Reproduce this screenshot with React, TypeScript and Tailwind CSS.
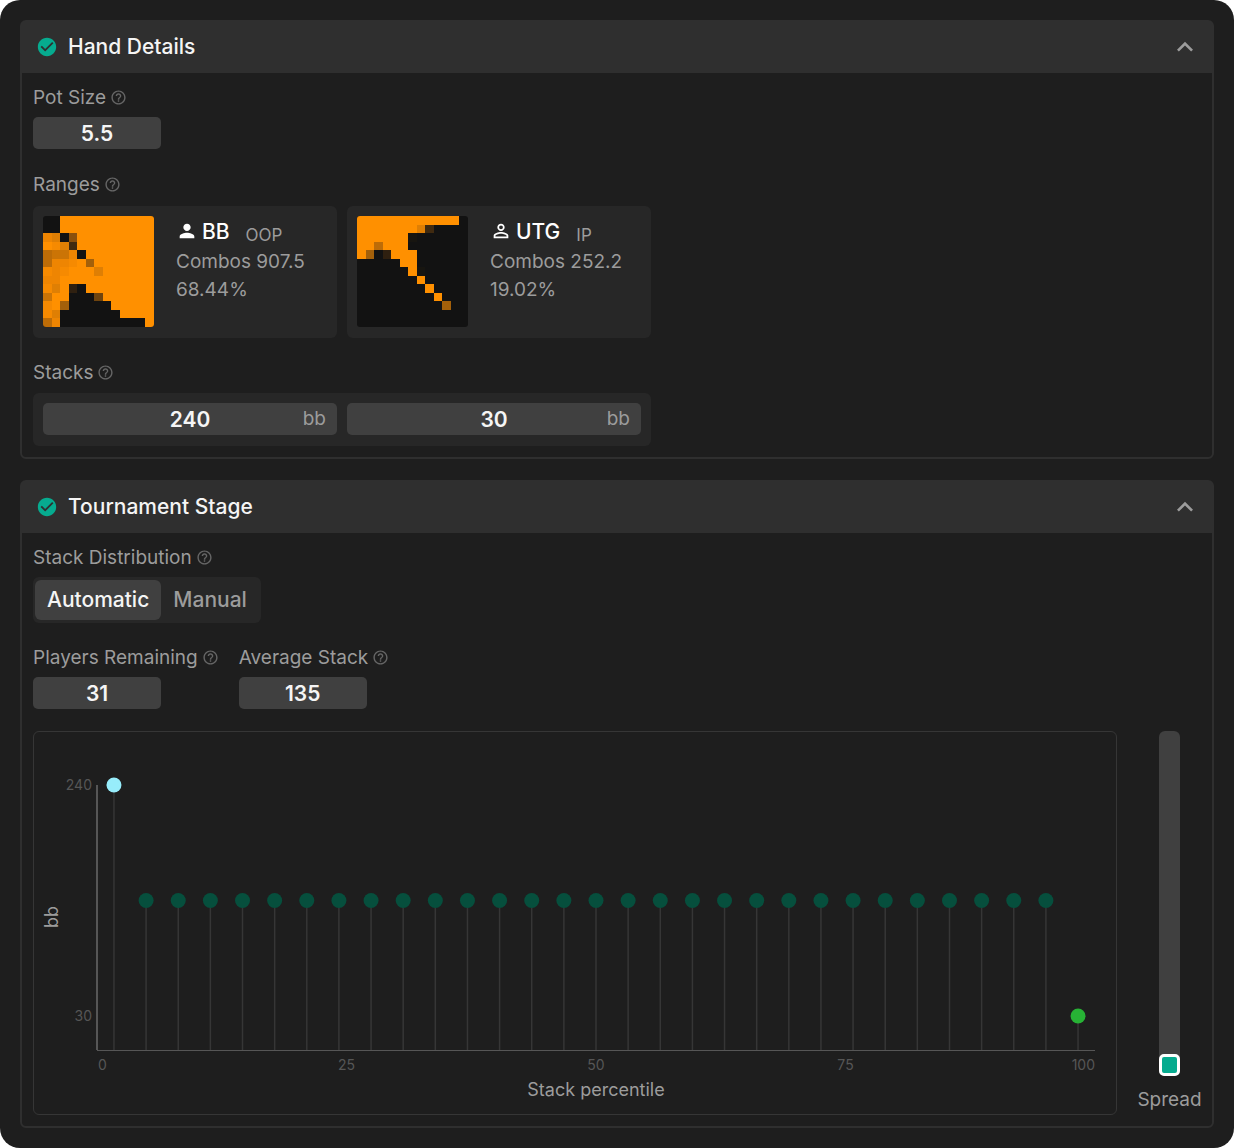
import React, { useId, useState } from "react";
import {
  MdCheckCircle,
  MdExpandLess,
  MdHelpOutline,
  MdPerson,
  MdPersonOutline,
} from "react-icons/md";

const ORANGE = "#ff9000";
const BLACK = "#121212";

/* Each row: "o" is a full cell, "." an empty one, any other key is a partial frequency. */
const SHADES: Record<string, string> = {
  o: ORANGE,
  ".": BLACK,
  a: "#f68a01",
  b: "#ee8502",
  c: "#df7f04",
  d: "#cb7406",
  e: "#bd6c07",
  f: "#a3600a",
  g: "#8a500d",
  h: "#6f440e",
  i: "#402a10",
  j: "#2f2010",
  k: "#171510",
};

const BB_RANGE = [
  "..ooooooooooo",
  "..ooooooooooo",
  "bc.gooooooooo",
  "oaciooooooooo",
  "eddb.oooooooo",
  "ebbaofooooooo",
  "abaooocoooooo",
  "bbooooooooooo",
  "acoj.oooooooo",
  "doo...hoooooo",
  "aof.....ooooo",
  "ac.......oooo",
  "eb..........o",
];

const UTG_RANGE = [
  "oooooooooooo.",
  "oooooooci....",
  "ooooook......",
  "ooeooo.......",
  "of.jooo......",
  ".....oo......",
  "......ok.....",
  ".......o.....",
  "........o....",
  ".........o...",
  "..........f..",
  ".............",
  ".............",
];

function RangeMatrix({ rows, title }: { rows: string[]; title: string }) {
  return (
    <svg
      role="img"
      aria-label={title}
      viewBox="0 0 13 13"
      shapeRendering="crispEdges"
      className="size-[111px] shrink-0 rounded-[3px]"
    >
      <rect width="13" height="13" fill={BLACK} />
      {rows.map((row, y) =>
        row
          .split("")
          .map((key, x) =>
            key === "." ? null : (
              <rect key={`${x}-${y}`} x={x} y={y} width="1" height="1" fill={SHADES[key]} />
            ),
          ),
      )}
    </svg>
  );
}

function Label({ text, htmlFor }: { text: string; htmlFor?: string }) {
  return (
    <div className="flex h-[25px] items-center gap-1 text-[19px] text-[#9c9c9c]">
      {htmlFor ? (
        <label htmlFor={htmlFor} className="pt-0.5">
          {text}
        </label>
      ) : (
        <span className="pt-0.5">{text}</span>
      )}
      <MdHelpOutline className="size-[17px] text-[#666666]" aria-hidden />
    </div>
  );
}

function NumberField({ label, initial }: { label: string; initial: string }) {
  const id = useId();
  const [value, setValue] = useState(initial);
  return (
    <div className="flex flex-col items-start gap-[7px]">
      <Label text={label} htmlFor={id} />
      <input
        id={id}
        value={value}
        onChange={(e) => setValue(e.target.value)}
        className="h-8 w-32 rounded-[5px] bg-[#404040] text-center text-[21px] font-semibold text-[#f5f5f5] outline-none"
      />
    </div>
  );
}

function StackField({ name, initial }: { name: string; initial: string }) {
  const [value, setValue] = useState(initial);
  return (
    <label className="relative flex-1">
      <input
        aria-label={name}
        value={value}
        onChange={(e) => setValue(e.target.value)}
        className="block h-8 w-full rounded-[5px] bg-[#404040] text-center text-[21px] font-semibold text-[#f5f5f5] outline-none"
      />
      <span className="absolute inset-y-0 right-[11px] flex items-center text-[19px] text-[#9c9c9c]">bb</span>
    </label>
  );
}

function RangeCard(props: {
  icon: React.ReactNode;
  name: string;
  role: string;
  combos: string;
  percent: string;
  rows: string[];
}) {
  return (
    <div className="flex h-[132px] w-[304px] gap-[22px] rounded-md bg-[#272727] p-2.5">
      <RangeMatrix rows={props.rows} title={`${props.name} range`} />
      <div className="text-[19px]/7 text-[#9c9c9c]">
        <div className="flex h-8 items-center gap-1 pb-0.5">
          {props.icon}
          <span className="pt-0.5 text-[21px] font-medium text-white">{props.name}</span>
          <span className="ml-3 pt-2 text-[17px]">{props.role}</span>
        </div>
        <div>{props.combos}</div>
        <div>{props.percent}</div>
      </div>
    </div>
  );
}

function Section({ title, children }: { title: string; children: React.ReactNode }) {
  const [open, setOpen] = useState(true);
  return (
    <section className="rounded-md border-2 border-[#2f2f2f]">
      <button
        type="button"
        aria-expanded={open}
        onClick={() => setOpen(!open)}
        className="flex h-[51px] w-full items-center bg-[#2f2f2f] pr-[11px] pb-0.5 pl-3.5 text-left"
      >
        <MdCheckCircle className="size-[22px] text-[#06ab8f]" aria-hidden />
        <span className="ml-2.5 flex-1 text-[21px] font-medium text-[#f5f5f5]">{title}</span>
        <MdExpandLess className={open ? "size-8 text-[#9c9c9c]" : "size-8 rotate-180 text-[#9c9c9c]"} aria-hidden />
      </button>
      {open && <div className="px-[11px] pt-3 pb-[11px]">{children}</div>}
    </section>
  );
}

const PLAYERS = 31;
const PLOT_HEIGHT = 265;
const STACKS = Array.from({ length: PLAYERS }, (_, i) => (i === 0 ? 240 : i === PLAYERS - 1 ? 30 : 135));

function dotColor(i: number) {
  if (i === 0) return "#97edfb";
  if (i === PLAYERS - 1) return "#27b235";
  return "#064f3d";
}

function StackChart() {
  return (
    <div className="min-w-0 flex-1 rounded-md border border-[#363636] pt-[53px] pr-[21px] pb-[64px] pl-[63px]">
      <svg
        role="img"
        aria-label="Stack in bb by stack percentile"
        width="100%"
        height={PLOT_HEIGHT}
        className="block overflow-visible"
      >
        {STACKS.map((stack, i) => {
          const x = `${1.7 + (i * 96.6) / (PLAYERS - 1)}%`;
          const y = PLOT_HEIGHT - 1 - stack * 1.1;
          return (
            <g key={i}>
              <line x1={x} x2={x} y1={y} y2={PLOT_HEIGHT} stroke="#363636" strokeWidth="1.5" />
              <circle cx={x} cy={y} r="7.5" fill={dotColor(i)} />
            </g>
          );
        })}
        <rect x="-1" y="0" width="2" height={PLOT_HEIGHT} fill="#565656" />
        <rect x="0" y={PLOT_HEIGHT} width="100%" height="1" fill="#565656" />
        <g fill="#565656" fontSize="14">
          <text x="-5" y="5" textAnchor="end">240</text>
          <text x="-5" y="236" textAnchor="end">30</text>
          <text x="1" y="285">0</text>
          <text x="25%" y="285" textAnchor="middle">25</text>
          <text x="50%" y="285" textAnchor="middle">50</text>
          <text x="75%" y="285" textAnchor="middle">75</text>
          <text x="100%" y="285" textAnchor="end">100</text>
        </g>
        <g fill="#9c9c9c" fontSize="18">
          <text x="50%" y="311" textAnchor="middle">Stack percentile</text>
          <text transform="translate(-39 132) rotate(-90)" textAnchor="middle">bb</text>
        </g>
      </svg>
    </div>
  );
}

function SpreadSlider() {
  const [spread, setSpread] = useState(0);
  return (
    <label className="flex w-[63px] flex-col items-center text-[19px]/7 text-[#9c9c9c]">
      <input
        type="range"
        min={0}
        max={100}
        value={spread}
        onChange={(e) => setSpread(Number(e.target.value))}
        className="h-[345px] w-[21px] appearance-none rounded-md bg-[#404040] [direction:rtl] [writing-mode:vertical-lr] [&::-webkit-slider-thumb]:h-[22px] [&::-webkit-slider-thumb]:w-[21px] [&::-webkit-slider-thumb]:appearance-none [&::-webkit-slider-thumb]:rounded-[5px] [&::-webkit-slider-thumb]:border-3 [&::-webkit-slider-thumb]:border-white [&::-webkit-slider-thumb]:bg-[#06ab8f]"
      />
      <span className="mt-2.5">Spread</span>
    </label>
  );
}

function ModeToggle() {
  const [mode, setMode] = useState("Automatic");
  return (
    <div className="flex w-fit rounded-md bg-[#272727] px-0.5 py-[3px] text-[21px] font-medium">
      {["Automatic", "Manual"].map((name) => (
        <button
          key={name}
          type="button"
          aria-pressed={mode === name}
          onClick={() => setMode(name)}
          className={
            mode === name
              ? "h-10 rounded-md bg-[#404040] px-3 text-[#f5f5f5]"
              : "h-10 rounded-md px-3 text-[#9c9c9c]"
          }
        >
          {name}
        </button>
      ))}
    </div>
  );
}

export default function App() {
  return (
    <div className="bg-white font-['Inter',sans-serif]">
      <main className="flex flex-col gap-[21px] rounded-[20px] bg-[#1e1e1e] p-5">
        <Section title="Hand Details">
          <NumberField label="Pot Size" initial="5.5" />
          <div className="mt-[23px] flex flex-col gap-[9px]">
            <Label text="Ranges" />
            <div className="flex gap-2.5">
              <RangeCard
                icon={<MdPerson className="size-[22px] text-white" aria-hidden />}
                name="BB"
                role="OOP"
                combos="Combos 907.5"
                percent="68.44%"
                rows={BB_RANGE}
              />
              <RangeCard
                icon={<MdPersonOutline className="size-[22px] text-white" aria-hidden />}
                name="UTG"
                role="IP"
                combos="Combos 252.2"
                percent="19.02%"
                rows={UTG_RANGE}
              />
            </div>
          </div>
          <div className="mt-[22px] flex flex-col gap-2">
            <Label text="Stacks" />
            <div className="flex h-[53px] w-[618px] gap-2.5 rounded-md bg-[#272727] p-2.5">
              <StackField name="BB stack" initial="240" />
              <StackField name="UTG stack" initial="30" />
            </div>
          </div>
        </Section>

        <Section title="Tournament Stage">
          <div className="flex flex-col gap-[7px]">
            <Label text="Stack Distribution" />
            <ModeToggle />
          </div>
          <div className="mt-[22px] flex gap-5">
            <NumberField label="Players Remaining" initial="31" />
            <NumberField label="Average Stack" initial="135" />
          </div>
          <div className="mt-[22px] flex gap-[21px]">
            <StackChart />
            <SpreadSlider />
          </div>
        </Section>
      </main>
    </div>
  );
}
